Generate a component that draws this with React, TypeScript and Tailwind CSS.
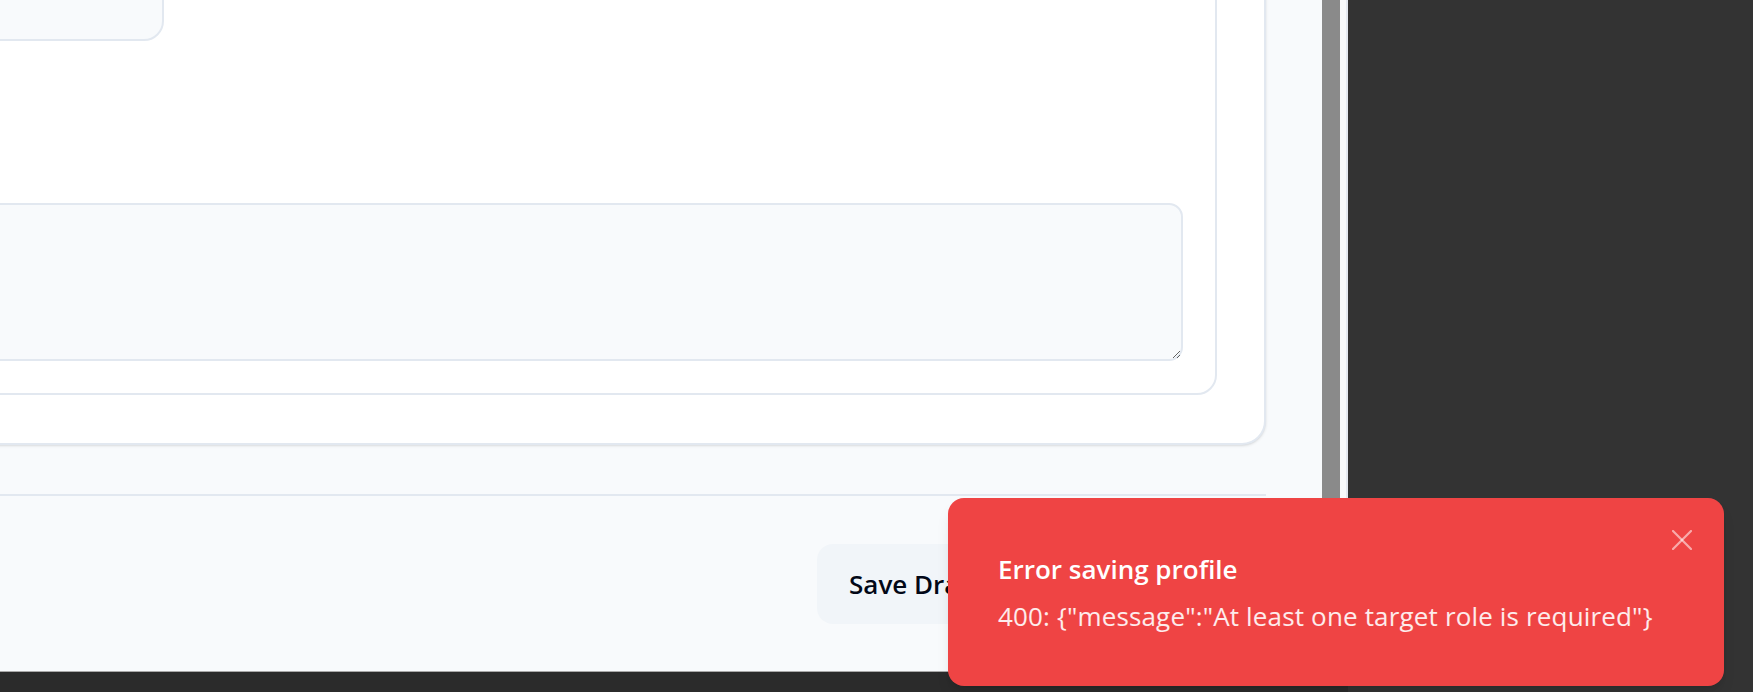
import React from "react";

export default function App() {
  const font = { fontFamily: '"Open Sans", "Noto Sans", Arial, sans-serif' };
  return (
    <div className="relative w-[1753px] h-[692px] overflow-hidden bg-[#333333]" style={font}>
      <div className="flex flex-col w-[1348px] h-[692px]">
        <div className="flex h-[672px] w-[1348px] border-b border-[#a9a9a9]">
          <div className="w-[1322px] h-full overflow-hidden bg-[#f8fafc]">
            <div className="-ml-[300px] mr-[56px] -mt-[142px]">
              <div className="bg-white border-2 border-[#e2e8f0] rounded-[24px] shadow-sm px-[47px] pt-[47px] pb-[48px]">
                <div className="bg-white border-2 border-[#e2e8f0] rounded-[20px] p-[32px]">
                  <div className="w-[381px] h-[100px] bg-[#f8fafc] border-2 border-[#e2e8f0] rounded-[20px]" />
                  <textarea
                    readOnly
                    className="block mt-[162px] w-full h-[158px] bg-[#f8fafc] border-2 border-[#e2e8f0] rounded-[14px] outline-none"
                  />
                </div>
              </div>
              <div className="mt-[49px] border-t-2 border-[#e2e8f0] pt-[48px] flex justify-end gap-[24px]">
                <button className="h-[80px] w-[190px] rounded-[16px] bg-[#f1f5f9] px-[32px] text-left text-[26px] font-semibold text-[#020817] whitespace-nowrap">
                  Save Draft
                </button>
                <button className="h-[80px] w-[235px] rounded-[16px] bg-[#0f172a] px-[32px] text-[26px] font-semibold text-white whitespace-nowrap">
                  Save Profile
                </button>
              </div>
            </div>
          </div>
          <div className="w-[18px] h-full bg-[#8a8a8a]" />
          <div className="w-[6px] h-full bg-[#f9fafb]" />
          <div className="w-[2px] h-full bg-[#e5e9f0]" />
        </div>
        <div className="h-[20px] bg-[#2b2b2b]" />
      </div>

      <div className="absolute left-[948px] top-[498px] w-[776px] h-[188px] rounded-[16px] bg-[#ef4444] shadow-lg pl-[50px] pt-[54px] flex flex-col gap-[13px]">
        <div className="text-[26px] leading-[34px] font-semibold text-white whitespace-nowrap">Error saving profile</div>
        <div className="text-[26px] leading-[34px] tracking-[0.16px] text-white/90 whitespace-nowrap">
          400: {'{"message":"At least one target role is required"}'}
        </div>
        <svg
          className="absolute right-[32px] top-[32px]"
          width="20"
          height="20"
          viewBox="0 0 20 20"
          fill="none"
          stroke="rgba(255,255,255,0.55)"
          strokeWidth="2.2"
          strokeLinecap="round"
        >
          <path d="M1 1 L19 19" />
          <path d="M19 1 L1 19" />
        </svg>
      </div>
    </div>
  );
}
